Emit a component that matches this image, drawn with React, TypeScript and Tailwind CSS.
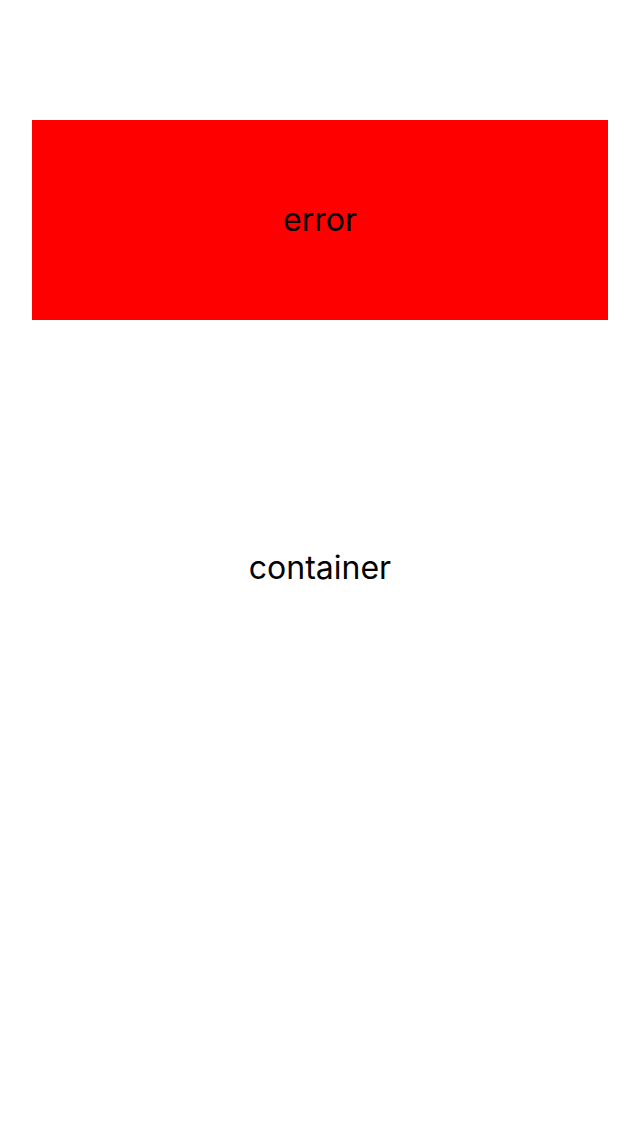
import React from 'react';

const App: React.FC = () => {
  return (
    <div className="grid h-[1136px] w-full bg-white font-['Inter','Liberation_Sans',sans-serif] text-black">
      <div className="[grid-area:1/1] flex items-center justify-center">
        <span className="text-[32px] leading-none">container</span>
      </div>
      <div className="[grid-area:1/1] self-start mt-[120px] mx-8 h-[200px] bg-[#ff0000] flex items-center justify-center">
        <span className="text-[32px] leading-none">error</span>
      </div>
    </div>
  );
};

export default App;
